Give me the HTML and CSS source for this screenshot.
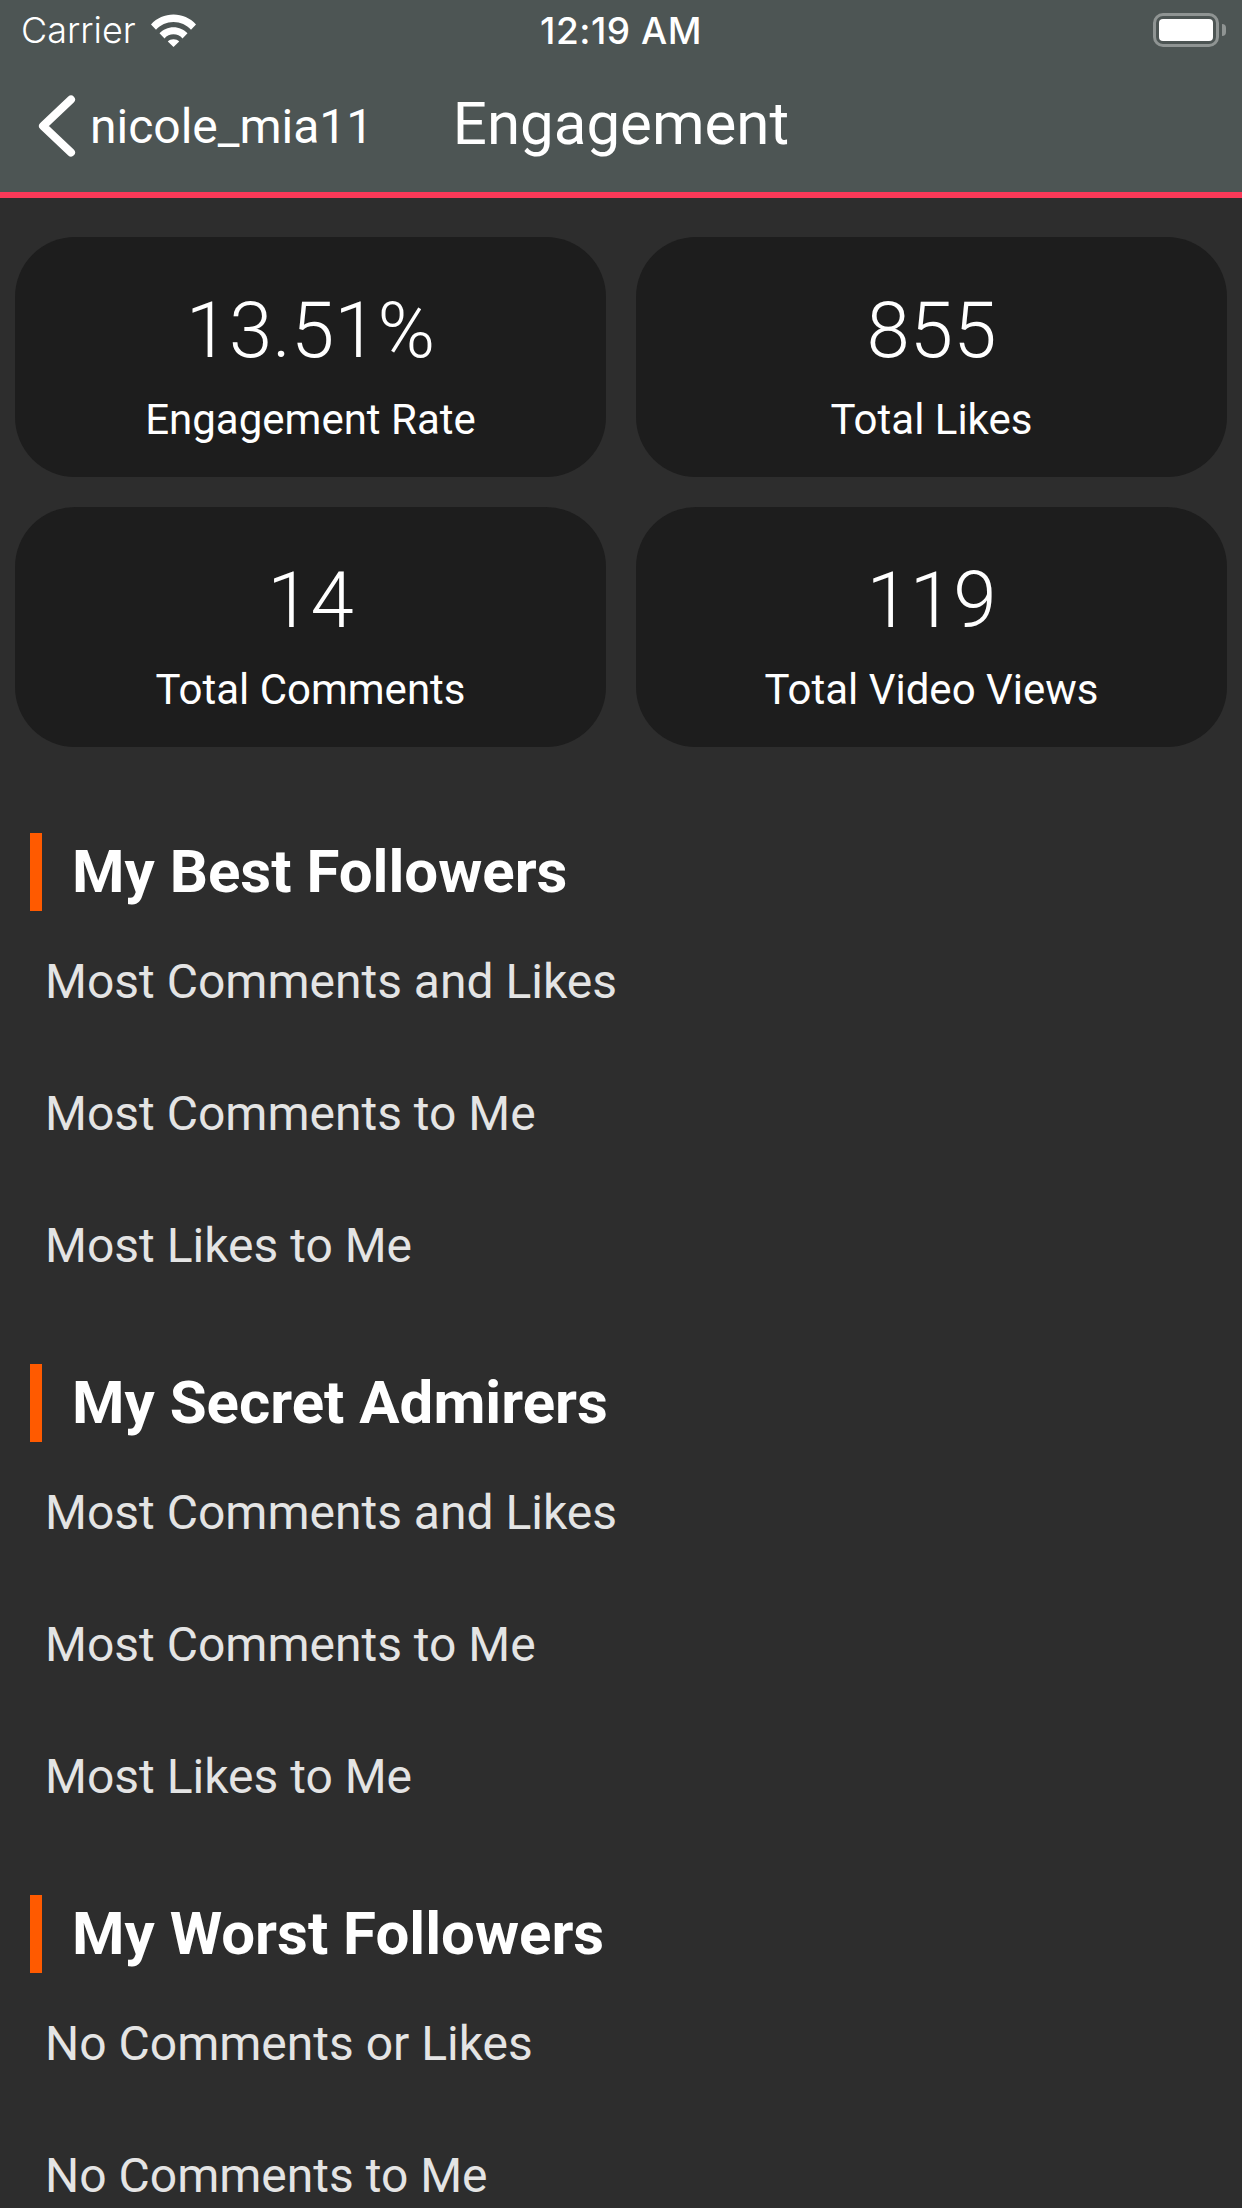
FILE: index.html
```html
<!DOCTYPE html>
<html>

	<head>
		<meta charset="UTF-8">
		<title>Engagement</title>
		<link rel="stylesheet" href="styles.css">
	</head>

	<body>
		<div class="page">
			<div class="top">
				<div class="status">
					<div class="status-left">
						<span>Carrier</span>
						<svg class="wifi" viewBox="0 0 45 33">
							<path d="M0 10.5C6 4 13.800 .6 22.500 .6S39 4 45 10.500L40 15.800C35.600 10.800 29.400 7.900 22.500 7.900S9.400 10.800 5 15.800Z" fill="#fff"/>
							<path d="M8.500 19.300C12 15.500 17 13.200 22.500 13.200S33 15.500 36.500 19.300L31.500 24.400C29.200 21.800 26 20.300 22.500 20.300S15.800 21.800 13.500 24.400Z" fill="#fff"/>
							<path d="M16.800 27.500C18.200 26 20.200 25.200 22.500 25.200S26.800 26 28.200 27.500L22.500 33Z" fill="#fff"/>
						</svg>
					</div>
					<div class="status-time">12:19 AM</div>
					<div class="status-right">
						<div class="battery"><i></i></div>
						<b class="battery-nub"></b>
					</div>
				</div>
				<div class="nav">
					<div class="nav-back">
						<svg class="chevron" viewBox="0 0 38 62">
							<path d="M33 4.500L5 31L33 57.500" fill="none" stroke="#fff" stroke-width="8" stroke-linecap="round" stroke-linejoin="round"/>
						</svg>
						<span>nicole_mia11</span>
					</div>
					<h1>Engagement</h1>
				</div>
			</div>

			<div class="cards">
				<div class="card">
					<div class="num">13.51%</div>
					<div class="label">Engagement Rate</div>
				</div>
				<div class="card">
					<div class="num">855</div>
					<div class="label">Total Likes</div>
				</div>
				<div class="card">
					<div class="num">14</div>
					<div class="label">Total Comments</div>
				</div>
				<div class="card">
					<div class="num">119</div>
					<div class="label">Total Video Views</div>
				</div>
			</div>

			<div class="section">
				<h2>My Best Followers</h2>
				<ul>
					<li>Most Comments and Likes</li>
					<li>Most Comments to Me</li>
					<li>Most Likes to Me</li>
				</ul>
			</div>
			<div class="section">
				<h2>My Secret Admirers</h2>
				<ul>
					<li>Most Comments and Likes</li>
					<li>Most Comments to Me</li>
					<li>Most Likes to Me</li>
				</ul>
			</div>
			<div class="section">
				<h2>My Worst Followers</h2>
				<ul>
					<li>No Comments or Likes</li>
					<li>No Comments to Me</li>
				</ul>
			</div>
		</div>
	</body>

</html>
```

FILE: styles.css
```css
* {
	margin: 0;
	padding: 0;
	box-sizing: border-box;
}

body {
	background-color: #2d2d2d;
	font-family: Roboto, "Liberation Sans", sans-serif;
	color: #fff;
}

.page {
	height: 2208px;
	overflow: hidden;
}

.top {
	height: 198px;
	background-color: #4d5554;
	border-bottom: 6px solid #fb3958;
}

.status {
	height: 60px;
	padding: 0 16px;
	display: grid;
	grid-template-columns: 1fr auto 1fr;
	align-items: center;
	font-family: Inter, "Liberation Sans", sans-serif;
	font-size: 36px;
}

.status-left {
	padding-left: 5px;
	display: flex;
	align-items: center;
	gap: 15px;
	font-weight: 300;
}

.wifi {
	width: 45px;
	height: 33px;
}

.status-time {
	font-size: 37px;
	font-weight: 500;
	letter-spacing: .5px;
}

.status-right {
	display: flex;
	justify-content: flex-end;
	align-items: center;
	gap: 3px;
}

.battery {
	width: 66px;
	height: 34px;
	padding: 3px;
	border: 3px solid #8f9493;
	border-radius: 10px;
}

.battery i {
	display: block;
	height: 100%;
	background-color: #fff;
	border-radius: 4px;
}

.battery-nub {
	width: 4px;
	height: 12px;
	background-color: #8f9493;
	border-radius: 0 4px 4px 0;
}

.nav {
	height: 132px;
	padding: 0 38px 6px;
	display: grid;
	grid-template-columns: 1fr auto 1fr;
	align-items: center;
}

.nav-back {
	margin-top: 6px;
	display: flex;
	align-items: center;
	gap: 14px;
	font-size: 48px;
	font-weight: 400;
}

.chevron {
	width: 38px;
	height: 62px;
}

.nav h1 {
	font-size: 60px;
	font-weight: 400;
}

.cards {
	padding: 39px 15px 0;
	display: grid;
	grid-template-columns: 1fr 1fr;
	gap: 30px;
}

.card {
	height: 240px;
	padding-top: 16px;
	background-color: #1d1d1d;
	border-radius: 60px;
	display: flex;
	flex-direction: column;
	align-items: center;
	justify-content: center;
}

.num {
	font-size: 78px;
	font-weight: 300;
	line-height: 90px;
}

.label {
	margin-top: 20px;
	font-size: 42px;
	line-height: 48px;
}

.section {
	padding-left: 30px;
}

.cards + .section {
	margin-top: 86px;
}

.section + .section {
	margin-top: 57px;
}

h2 {
	height: 78px;
	border-left: 12px solid #ff5a00;
	padding-left: 30px;
	font-size: 60px;
	font-weight: 700;
	line-height: 78px;
}

ul {
	list-style: none;
}

li {
	height: 132px;
	padding-left: 15px;
	font-size: 48px;
	font-weight: 400;
	line-height: 142px;
	color: #e4e4e4;
}
```
